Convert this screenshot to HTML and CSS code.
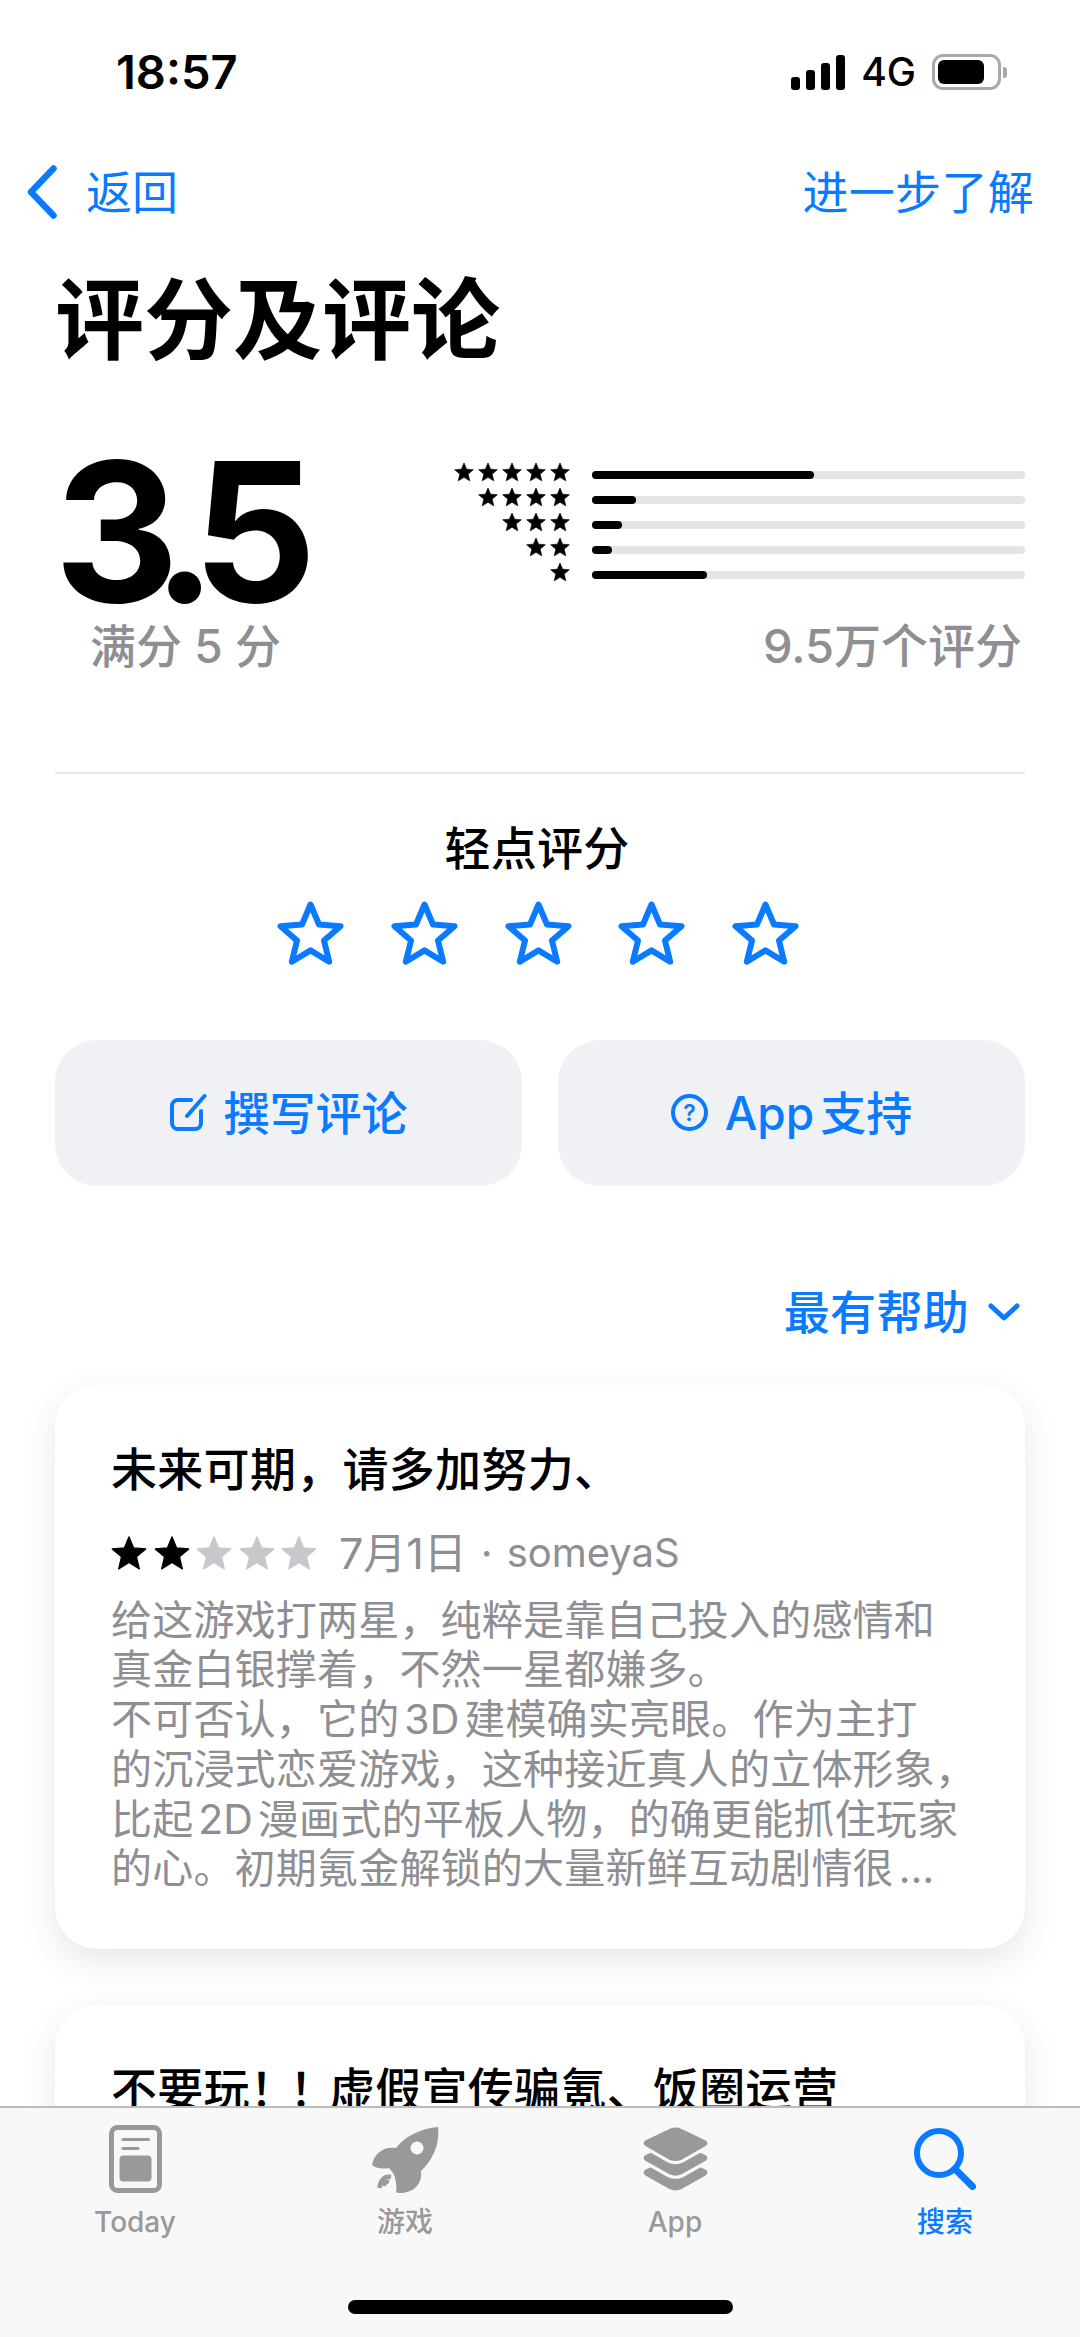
FILE: index.html
```html
<!DOCTYPE html>
<html lang="zh-CN">
<head>
<meta charset="utf-8">
<title>评分及评论</title>
<link rel="stylesheet" href="styles.css">
</head>
<body>
<svg class="defs" width="0" height="0" aria-hidden="true">
  <symbol id="star" viewBox="0 0 24 24"><path d="M12 1.200 15.100 8.600 23.200 9.300 17 14.500 18.900 22.600 12 18.300 5.100 22.600 7 14.500 .8 9.300 8.900 8.600Z" fill="currentColor" stroke="currentColor" stroke-width=".8" stroke-linejoin="round"/></symbol>
</svg>
<div class="screen">
  <header class="status">
    <span class="time">18:57</span>
    <div class="status-right">
      <div class="signal"><i class="s1"></i><i class="s2"></i><i class="s3"></i><i class="s4"></i></div>
      <span class="net">4G</span>
      <div class="battery"><div class="battery-body"><div class="battery-level"></div></div><div class="battery-cap"></div></div>
    </div>
  </header>

  <nav class="nav">
    <div class="back">
      <svg class="back-icon" viewBox="0 0 32 54"><path d="M27.500 3.500 5 27l22.500 23.500" fill="none" stroke="currentColor" stroke-width="6.500" stroke-linecap="round" stroke-linejoin="round"/></svg>
      <span>返回</span>
    </div>
    <span class="more">进一步了解</span>
  </nav>

  <h1 class="page-title">评分及评论</h1>

  <section class="summary">
    <div class="summary-left">
      <div class="score">3.5</div>
      <div class="caption caption-left">满分 5 分</div>
    </div>
    <div class="summary-right">
      <div class="histogram">
        <div class="hist-row">
          <div class="hist-stars"><svg><use href="#star"/></svg><svg><use href="#star"/></svg><svg><use href="#star"/></svg><svg><use href="#star"/></svg><svg><use href="#star"/></svg></div>
          <div class="track"><div class="fill" style="width:222px"></div></div>
        </div>
        <div class="hist-row">
          <div class="hist-stars"><svg><use href="#star"/></svg><svg><use href="#star"/></svg><svg><use href="#star"/></svg><svg><use href="#star"/></svg></div>
          <div class="track"><div class="fill" style="width:44px"></div></div>
        </div>
        <div class="hist-row">
          <div class="hist-stars"><svg><use href="#star"/></svg><svg><use href="#star"/></svg><svg><use href="#star"/></svg></div>
          <div class="track"><div class="fill" style="width:30px"></div></div>
        </div>
        <div class="hist-row">
          <div class="hist-stars"><svg><use href="#star"/></svg><svg><use href="#star"/></svg></div>
          <div class="track"><div class="fill" style="width:20px"></div></div>
        </div>
        <div class="hist-row">
          <div class="hist-stars"><svg><use href="#star"/></svg></div>
          <div class="track"><div class="fill" style="width:115px"></div></div>
        </div>
      </div>
      <div class="caption caption-right">9.5万个评分</div>
    </div>
  </section>

  <hr class="divider">

  <section class="tap">
    <div class="tap-label">轻点评分</div>
    <div class="tap-stars">
      <svg viewBox="0 0 67 64"><path id="ostar" d="M33.500 3.500 42 23.500 63.500 25.300 47 39.600 52.200 60.700 33.500 49.400 14.800 60.700 20 39.600 3.500 25.300 25 23.500Z"/></svg>
      <svg viewBox="0 0 67 64"><use href="#ostar"/></svg>
      <svg viewBox="0 0 67 64"><use href="#ostar"/></svg>
      <svg viewBox="0 0 67 64"><use href="#ostar"/></svg>
      <svg viewBox="0 0 67 64"><use href="#ostar"/></svg>
    </div>
  </section>

  <section class="actions">
    <div class="action">
      <svg class="action-icon" viewBox="0 0 37 37"><path d="M21 6H8a6 6 0 0 0-6 6v17a6 6 0 0 0 6 6h17a6 6 0 0 0 6-6V17" fill="none" stroke="currentColor" stroke-width="4" stroke-linecap="round"/><path d="M34.500 2 17 22" fill="none" stroke="currentColor" stroke-width="4" stroke-linecap="round"/></svg>
      <span>撰写评论</span>
    </div>
    <div class="action">
      <svg class="action-icon" viewBox="0 0 37 37"><circle cx="18.500" cy="18.500" r="16.500" fill="none" stroke="currentColor" stroke-width="4"/><text x="18.500" y="26.500" text-anchor="middle" class="q">?</text></svg>
      <span class="action-tight">App 支持</span>
    </div>
  </section>

  <div class="sort">
    <span>最有帮助</span>
    <svg class="sort-icon" viewBox="0 0 32 18"><path d="M3 3l13 12L29 3" fill="none" stroke="currentColor" stroke-width="5" stroke-linecap="round" stroke-linejoin="round"/></svg>
  </div>

  <article class="card">
    <h2 class="card-title">未来可期，请多加努力、</h2>
    <div class="card-meta">
      <div class="card-stars">
        <svg><use href="#star"/></svg><svg><use href="#star"/></svg><svg class="off"><use href="#star"/></svg><svg class="off"><use href="#star"/></svg><svg class="off"><use href="#star"/></svg>
      </div>
      <span class="meta-date">7月1日</span>
      <span class="meta-sep">·</span>
      <span class="meta-name">someyaS</span>
    </div>
    <p class="card-body">给这游戏打两星，纯粹是靠自己投入的感情和<br>真金白银撑着，不然一星都嫌多。<br>不可否认，它的 3D 建模确实亮眼。作为主打<br>的沉浸式恋爱游戏，这种接近真人的立体形象，<br>比起 2D 漫画式的平板人物，的确更能抓住玩家<br>的心。初期氪金解锁的大量新鲜互动剧情很<span class="dots">…</span></p>
  </article>

  <article class="card card-next">
    <h2 class="card-title">不要玩<span class="bangs">！！</span>虚假宣传骗氪、饭圈运营</h2>
  </article>

  <footer class="tabbar">
    <div class="tabs">
      <div class="tab">
        <div class="tab-icon">
          <svg width="53" height="68" viewBox="0 0 53 68"><rect x="2.500" y="2.500" width="48" height="63" rx="6" fill="none" stroke="currentColor" stroke-width="5"/><rect x="12.500" y="13" width="28.500" height="3" rx="1.500" fill="currentColor"/><rect x="12.500" y="22" width="18" height="3" rx="1.500" fill="currentColor"/><rect x="10.500" y="30.500" width="32" height="26" rx="4" fill="currentColor"/></svg>
        </div>
        <span>Today</span>
      </div>
      <div class="tab">
        <div class="tab-icon">
          <svg width="67" height="67" viewBox="0 0 67 67"><path d="M66 1C68 16 62 33 49 45 50 53 47 60 40 64 34 67 27 68 24 66 25 60 24 52 21 47L17 42C12 43 5 43 0 39 2 28 11 20 24 22 33 10 50 2 66 1Z" fill="currentColor"/><circle cx="45" cy="22" r="6.500" fill="#f8f8f8"/><path d="M19 51C12 50 8 55 7.500 62" fill="none" stroke="currentColor" stroke-width="4.500"/><path d="M17 56C14 55 12.500 57 12 60" fill="none" stroke="currentColor" stroke-width="4"/></svg>
        </div>
        <span>游戏</span>
      </div>
      <div class="tab">
        <div class="tab-icon">
          <svg width="67" height="65" viewBox="1.500 1.500 64 62"><path class="layer" d="M27 30Q33.500 27 40 30L63 41Q68 45 63 49L40 62Q33.500 65 27 62L4 49Q-1 45 4 41Z"/><path class="layer" d="M27 16Q33.500 13 40 16L63 27Q68 31 63 35L40 48Q33.500 51 27 48L4 35Q-1 31 4 27Z"/><path class="layer" d="M27 2Q33.500-1 40 2L63 13Q68 17 63 21L40 34Q33.500 37 27 34L4 21Q-1 17 4 13Z"/></svg>
        </div>
        <span>App</span>
      </div>
      <div class="tab tab-active">
        <div class="tab-icon">
          <svg width="62" height="62" viewBox="0 0 62 62"><circle cx="25" cy="25" r="22" fill="none" stroke="currentColor" stroke-width="6"/><path d="M41 41 58.500 58.500" fill="none" stroke="currentColor" stroke-width="7" stroke-linecap="round"/></svg>
        </div>
        <span>搜索</span>
      </div>
    </div>
    <div class="home-row"><div class="home-bar"></div></div>
  </footer>
</div>
</body>
</html>
```
FILE: styles.css
```css
* { box-sizing: border-box; }

html, body {
  margin: 0;
  padding: 0;
  background: #fff;
}

body {
  font-family: Inter, "Noto Sans CJK SC", sans-serif;
  color: #000;
}

.defs { position: absolute; }

.screen {
  position: relative;
  width: 1080px;
  height: 2337px;
  overflow: hidden;
  background: #fff;
}

/* status bar */
.status {
  height: 144px;
  display: flex;
  justify-content: space-between;
  align-items: center;
  padding: 0 73px 0 116px;
}

.time {
  font-size: 47px;
  font-weight: 600;
  line-height: 50px;
}

.status-right {
  display: flex;
  align-items: center;
}

.signal {
  display: flex;
  align-items: flex-end;
  gap: 6px;
  height: 35px;
}

.signal i {
  display: block;
  width: 9px;
  border-radius: 3px;
  background: #000;
}

.s1 { height: 13px; }
.s2 { height: 20px; }
.s3 { height: 27px; }
.s4 { height: 35px; }

.net {
  margin-left: 16px;
  font-size: 39px;
  font-weight: 500;
  line-height: 40px;
}

.battery {
  display: flex;
  align-items: center;
  gap: 2px;
  margin-left: 16px;
}

.battery-body {
  width: 69px;
  height: 36px;
  padding: 3px 14px 3px 3px;
  border: 3px solid #a9a9a9;
  border-radius: 11px;
}

.battery-level {
  height: 100%;
  border-radius: 6px;
  background: #000;
}

.battery-cap {
  width: 4px;
  height: 11px;
  border-radius: 0 3px 3px 0;
  background: #a9a9a9;
}

/* nav */
.nav {
  height: 96px;
  display: flex;
  justify-content: space-between;
  align-items: center;
  padding: 0 46px 0 26px;
  font-size: 46px;
  line-height: 50px;
  color: #0a7aff;
}

.more {
  letter-spacing: .3px;
}

.back {
  display: flex;
  align-items: center;
  gap: 28px;
}

.back-icon {
  width: 32px;
  height: 54px;
}

.page-title {
  margin: 35px 0 0 55px;
  font-size: 89px;
  font-weight: 700;
  line-height: 90px;
}

/* rating summary */
.summary {
  display: flex;
  justify-content: space-between;
  margin-top: 85px;
  padding: 0 55px 0 54px;
}

.score {
  height: 171px;
  font-size: 194px;
  font-weight: 700;
  line-height: 163px;
  letter-spacing: -23px;
}

.caption {
  font-size: 46px;
  font-weight: 500;
  line-height: 50px;
  color: #8e8e93;
}

.caption-left {
  padding-left: 36px;
}

.caption-right {
  text-align: right;
  padding-right: 3px;
  font-size: 47px;
}

.summary-right {
  display: flex;
  flex-direction: column;
  justify-content: space-between;
}

.histogram {
  display: flex;
  flex-direction: column;
  padding-top: 12px;
}

.hist-row {
  height: 25px;
  display: flex;
  align-items: center;
  gap: 22px;
}

.hist-stars {
  width: 120px;
  height: 20px;
  display: flex;
  justify-content: flex-end;
  gap: 4px;
  margin-bottom: 5px;
}

.hist-stars svg {
  width: 20px;
  height: 20px;
  color: #000;
}

.track {
  width: 433px;
  height: 8px;
  border-radius: 4px;
  background: #e4e4e8;
}

.fill {
  height: 100%;
  border-radius: 4px;
  background: #000;
}

.divider {
  height: 2px;
  margin: 100.500px 55px 0;
  border: 0;
  background: #e5e5ea;
}

/* tap to rate */
.tap {
  margin-top: 49.500px;
  display: flex;
  flex-direction: column;
  align-items: center;
}

.tap-label {
  padding-right: 6px;
  font-size: 46px;
  font-weight: 500;
  line-height: 50px;
  letter-spacing: .3px;
}

.tap-stars {
  display: flex;
  gap: 46.600px;
  margin-top: 28px;
  padding-right: 4px;
}

.tap-stars svg {
  width: 67px;
  height: 64px;
}

#ostar {
  fill: none;
  stroke: #0a7aff;
  stroke-width: 6px;
  stroke-linejoin: round;
}

/* actions */
.actions {
  display: flex;
  gap: 36px;
  margin-top: 74.500px;
  padding: 0 55px;
}

.action {
  flex: 1;
  height: 146px;
  display: flex;
  justify-content: center;
  align-items: center;
  gap: 17px;
  border-radius: 42px;
  background: #f0f1f5;
  color: #0a7aff;
  font-size: 46px;
  font-weight: 500;
  line-height: 50px;
}

.action-tight {
  word-spacing: -6px;
}

.action-icon {
  width: 37px;
  height: 37px;
}

.q {
  font-size: 23px;
  font-weight: 600;
  fill: currentColor;
}

.sort {
  display: flex;
  justify-content: flex-end;
  align-items: center;
  gap: 19px;
  margin-top: 101px;
  padding-right: 60px;
  color: #0a7aff;
  font-size: 46px;
  font-weight: 500;
  line-height: 50px;
  letter-spacing: .3px;
}

.sort-icon {
  width: 32px;
  height: 18px;
}

/* cards */
.card {
  height: 564px;
  margin: 48px 55px 0;
  padding: 59px 57px 0 56px;
  border-radius: 42px;
  background: #fff;
  box-shadow: 0 12px 36px rgba(0, 0, 0, .1);
}

.card-next {
  margin-top: 56px;
}

.card-title {
  margin: 0;
  font-size: 46px;
  font-weight: 500;
  line-height: 50px;
  letter-spacing: .3px;
}

.bangs {
  letter-spacing: -6.500px;
}

.card-meta {
  height: 40px;
  display: flex;
  align-items: center;
  margin-top: 39px;
  line-height: 40px;
  color: #8e8e93;
}

.card-stars {
  display: flex;
  gap: 6.500px;
  margin-right: 22px;
  color: #000;
}

.card-stars svg {
  width: 36px;
  height: 36px;
}

.card-stars .off {
  color: #c7c7cc;
}

.meta-date {
  font-size: 43px;
}

.meta-sep {
  margin: 0 14px;
  font-size: 41px;
}

.meta-name {
  font-size: 40px;
}

.card-body {
  margin: 23px 0 0;
  font-size: 41px;
  line-height: 49.800px;
  letter-spacing: .2px;
  word-spacing: -7px;
  color: #8e8e93;
  white-space: nowrap;
}

.dots {
  margin-left: 5px;
}

/* tab bar */
.tabbar {
  position: absolute;
  left: 0;
  right: 0;
  bottom: 0;
  height: 231px;
  border-top: 2px solid #bcbcbc;
  background: #f8f8f8;
}

.tabs {
  display: flex;
  padding-top: 17px;
}

.tab {
  flex: 1;
  display: flex;
  flex-direction: column;
  align-items: center;
  gap: 14px;
  color: #999;
  font-size: 28px;
  line-height: 30px;
  font-weight: 500;
}

.tab-active {
  color: #0a7aff;
}

.tab-icon {
  height: 68px;
  display: flex;
  align-items: center;
  color: #999;
}

.tab-active .tab-icon {
  color: #0a7aff;
}

.layer {
  fill: #999;
  stroke: #f8f8f8;
  stroke-width: 3px;
}

.home-row {
  display: flex;
  justify-content: center;
  margin-top: 63px;
}

.home-bar {
  width: 385px;
  height: 14px;
  border-radius: 7px;
  background: #000;
}
```
